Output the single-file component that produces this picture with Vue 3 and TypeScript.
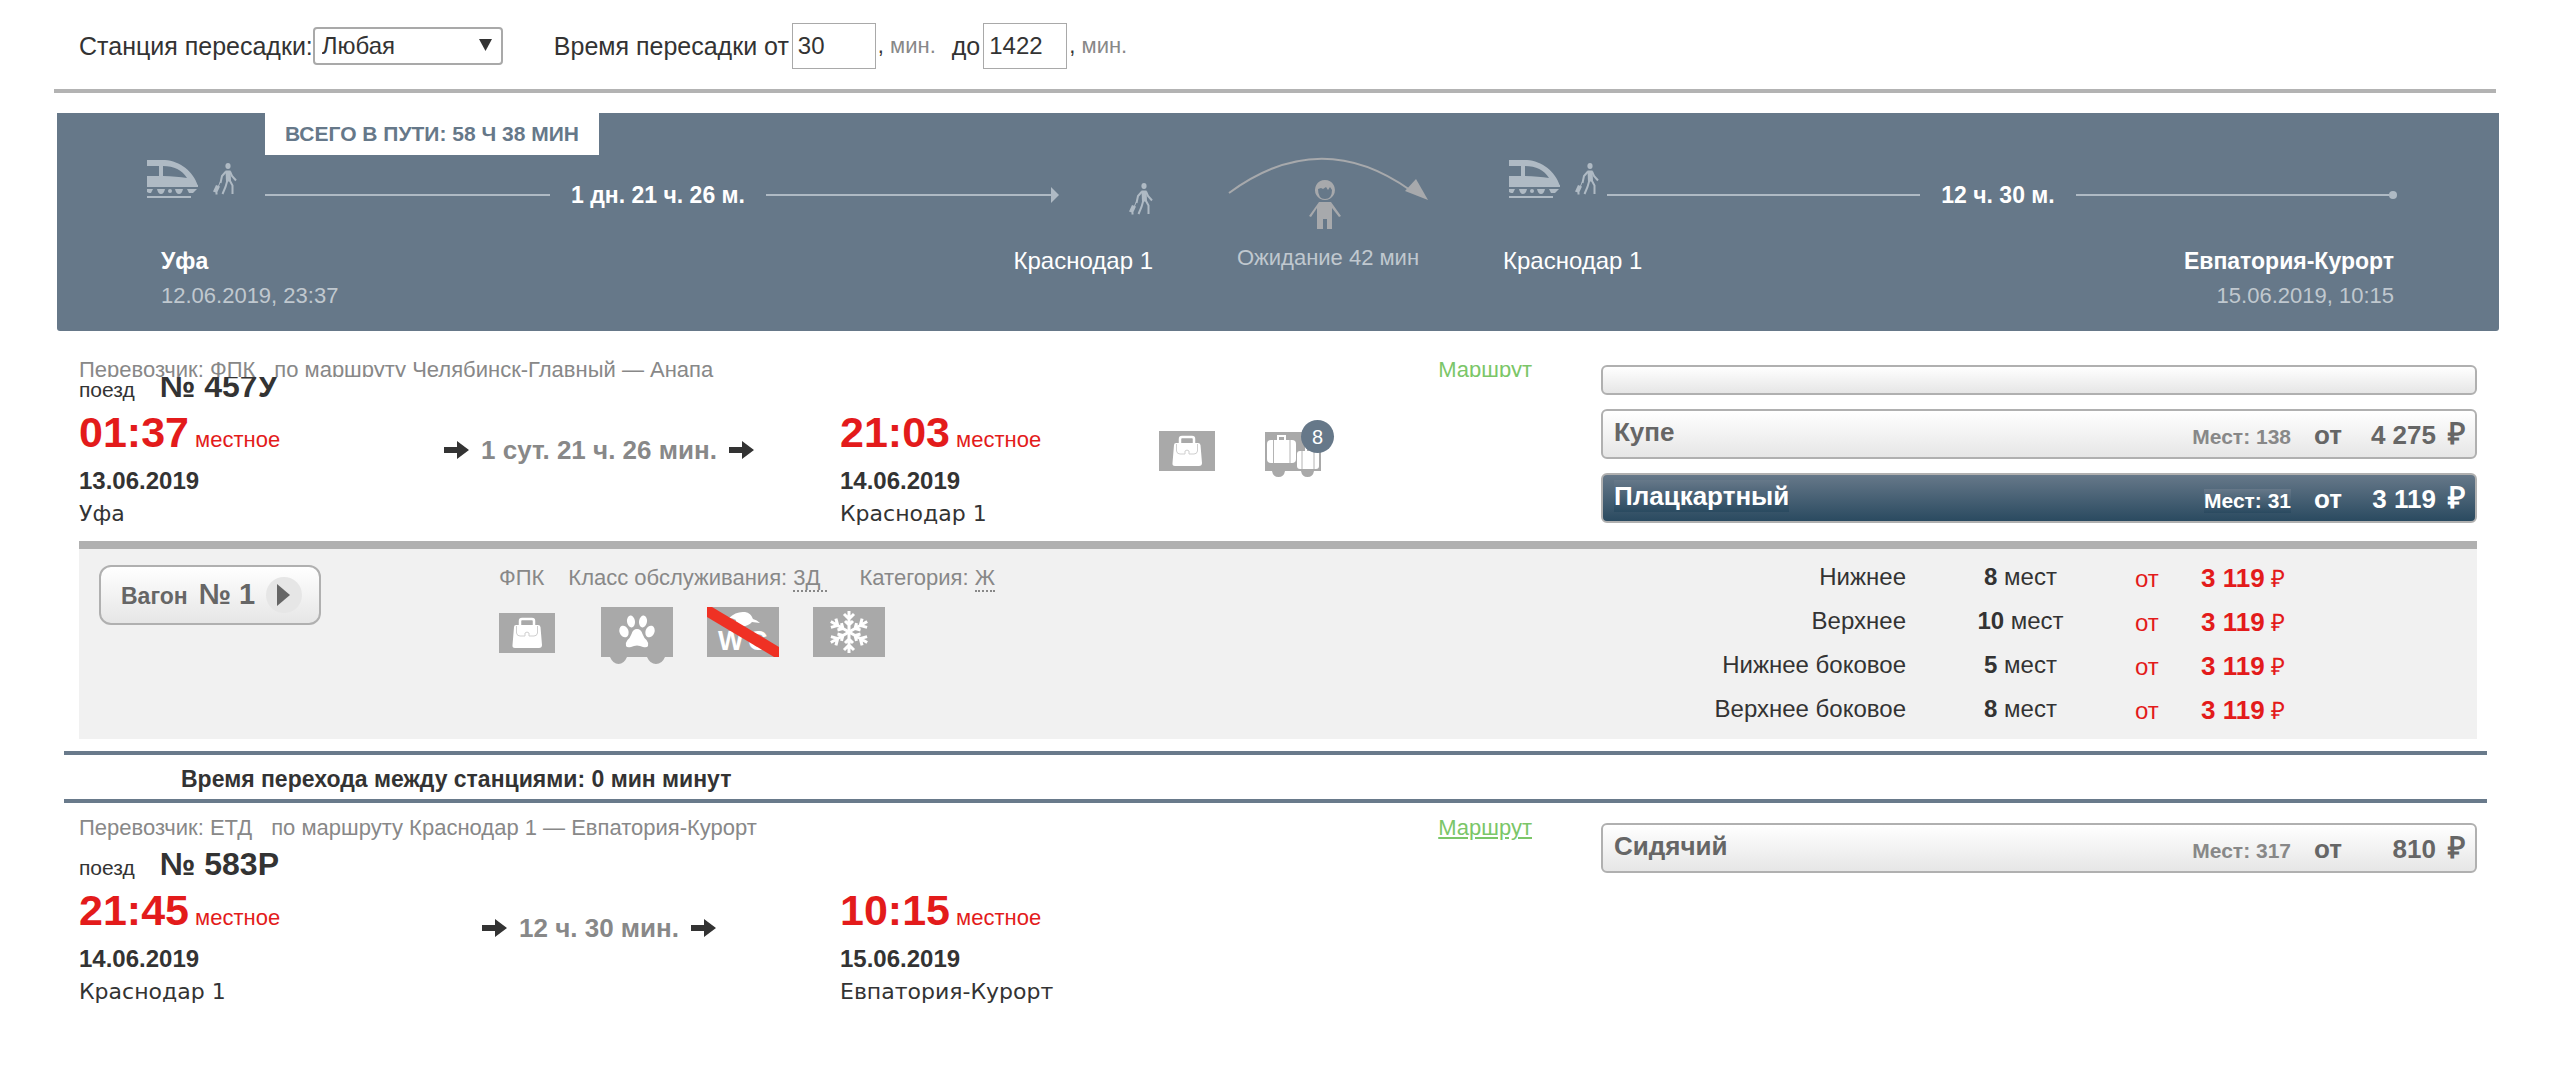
<script setup lang="ts">
import { ref } from 'vue'

interface Stop {
  time: string
  date: string
  city: string
}

interface Fare {
  name: string
  seats: number
  price: string
  selected?: boolean
  blank?: boolean
}

interface Trip {
  id: string
  carrier: string
  route: string
  number: string
  duration: string
  from: Stop
  to: Stop
  clipped: boolean
  services: boolean
  fares: Fare[]
}

const station = ref('any')
const minWait = ref('30')
const maxWait = ref('1422')

const first: Trip = {
  id: 'first',
  carrier: 'ФПК',
  route: 'Челябинск-Главный — Анапа',
  number: '№ 457У',
  duration: '1 сут. 21 ч. 26 мин.',
  from: { time: '01:37', date: '13.06.2019', city: 'Уфа' },
  to: { time: '21:03', date: '14.06.2019', city: 'Краснодар 1' },
  clipped: true,
  services: true,
  fares: [
    { name: '', seats: 0, price: '', blank: true },
    { name: 'Купе', seats: 138, price: '4 275' },
    { name: 'Плацкартный', seats: 31, price: '3 119', selected: true },
  ],
}

const second: Trip = {
  id: 'second',
  carrier: 'ЕТД',
  route: 'Краснодар 1 — Евпатория-Курорт',
  number: '№ 583Р',
  duration: '12 ч. 30 мин.',
  from: { time: '21:45', date: '14.06.2019', city: 'Краснодар 1' },
  to: { time: '10:15', date: '15.06.2019', city: 'Евпатория-Курорт' },
  clipped: false,
  services: false,
  fares: [{ name: 'Сидячий', seats: 317, price: '810' }],
}

const trips: Trip[] = [first, second]

const berths = [
  { name: 'Нижнее', count: 8, price: '3 119' },
  { name: 'Верхнее', count: 10, price: '3 119' },
  { name: 'Нижнее боковое', count: 5, price: '3 119' },
  { name: 'Верхнее боковое', count: 8, price: '3 119' },
]

const snowArms = [0, 60, 120, 180, 240, 300]
</script>

<template>
  <svg class="defs" aria-hidden="true">
    <symbol id="i-train" viewBox="0 0 51 39">
      <path fill-rule="evenodd" d="M0 0H18C33 1 46 11 51 26H0V16H12V6H0ZM16 6V16C25 16 33 17 40 18C35 10 27 6 16 6Z" />
      <path d="M0 25H51V27H0ZM0 29H6L4 33H2L0 32ZM10 29H18Q17 34 14 34Q11 34 10 29ZM28 29H36Q35 34 32 34Q29 34 28 29ZM40 29H50L46 33H42Z" />
      <circle cx="23" cy="31" r="2" />
      <rect y="36" width="44" height="2" />
    </symbol>
    <symbol id="i-walker" viewBox="0 0 24 32">
      <ellipse cx="15" cy="3" rx="2.6" ry="3" />
      <path d="M12.5 7.500H17.500L18 18L13 19Z" />
      <path d="M13 8.500L9 13L7.500 20M17 8.500L19 13L23 17.500M14.500 17L12.500 24L9.500 31M16.500 17L19.500 22.500L19.500 31" fill="none" stroke="currentColor" stroke-width="2" />
      <path d="M3 22L7 23.500L4 30L0 28.500ZM2.500 29.500H4.500V31.500H2.500Z" />
      <path d="M5.500 23L7.500 18.500" fill="none" stroke="currentColor" stroke-width="1" />
    </symbol>
    <symbol id="i-bag" viewBox="0 0 56 40">
      <rect width="56" height="40" fill="#a9a9a9" />
      <path d="M21 13V8Q21 6 23 6H33Q35 6 35 8V13" fill="none" stroke="#fff" stroke-width="2.500" />
      <path d="M17 12H39Q41 12 41.500 14L43 32Q43 35 40 35H16Q13 35 13.500 32L15 14Q15 12 17 12Z" fill="#fff" />
      <path d="M17.500 13V20Q18 23 21 23H26V20Q28 18 30 20V23H35Q38 23 38.500 20V13" fill="none" stroke="#cfcfcf" stroke-width="1" />
    </symbol>
    <symbol id="i-arrow" viewBox="0 0 25 18">
      <path d="M0 6H13V0L25 9L13 18V12H0Z" />
    </symbol>
  </svg>

  <main class="page">
    <form class="filters" @submit.prevent>
      <label for="station">Станция пересадки:</label>
      <span class="select-wrap">
        <select id="station" v-model="station">
          <option value="any">Любая</option>
        </select>
        <svg class="caret" width="13" height="12" viewBox="0 0 13 12"><path d="M0 0H13L6.500 12Z" fill="#333" /></svg>
      </span>
      <label for="min-wait">Время пересадки от</label>
      <input id="min-wait" v-model="minWait" type="text" />
      <span class="unit"><span class="comma">,</span> мин.</span>
      <label class="to-label" for="max-wait">до</label>
      <input id="max-wait" v-model="maxWait" type="text" />
      <span class="unit"><span class="comma">,</span> мин.</span>
    </form>

    <hr class="rule" />

    <section class="journey">
      <h2 class="total">ВСЕГО В ПУТИ: 58 Ч 38 МИН</h2>
      <div class="legs">
        <div class="leg leg-first">
          <div class="track">
            <svg class="train"><use href="#i-train" /></svg>
            <svg class="walker"><use href="#i-walker" /></svg>
            <span class="line line-first"></span>
            <b>1 дн. 21 ч. 26 м.</b>
            <span class="line"></span>
            <svg class="head" width="8" height="16" viewBox="0 0 8 16"><path d="M0 0L8 8L0 16Z" /></svg>
            <svg class="walker walker-end"><use href="#i-walker" /></svg>
          </div>
          <div class="places">
            <div>
              <strong>Уфа</strong>
              <time>12.06.2019, 23:37</time>
            </div>
            <div class="end"><span>Краснодар 1</span></div>
          </div>
        </div>

        <div class="pause">
          <svg width="200" height="80" viewBox="0 0 200 80">
            <path d="M1 38Q92 -29 182 35" fill="none" stroke="#a7a9ac" stroke-width="2" />
            <path d="M188 24L200 45L177 36Z" />
            <path fill-rule="evenodd" d="M97 25A10 10 0 1 1 96.900 25ZM90 34Q90 44 97 44Q104 44 104 35L102 32L100 35L98 32L95 34L93 33Z" />
            <path d="M91 47H103L113 61L111 62L104 53V74H99V64H95V74H89V53L83 62L81 61Z" />
          </svg>
          <p>Ожидание 42 мин</p>
        </div>

        <div class="leg leg-second">
          <div class="track">
            <svg class="train"><use href="#i-train" /></svg>
            <svg class="walker"><use href="#i-walker" /></svg>
            <span class="line line-near"></span>
            <b>12 ч. 30 м.</b>
            <span class="line"></span>
            <i class="dot"></i>
          </div>
          <div class="places">
            <div><span>Краснодар 1</span></div>
            <div class="end">
              <strong>Евпатория-Курорт</strong>
              <time>15.06.2019, 10:15</time>
            </div>
          </div>
        </div>
      </div>
    </section>

    <template v-for="trip in trips" :key="trip.id">
      <article class="trip" :class="{ clipped: trip.clipped }">
        <div class="info">
          <div class="carrier">
            <p>
              <span>Перевозчик: {{ trip.carrier }}</span>
              <span class="via">по маршруту {{ trip.route }}</span>
            </p>
            <a href="#">Маршрут</a>
          </div>
          <div class="number"><div class="number-text"><small>поезд</small><b>{{ trip.number }}</b></div></div>
          <div class="times">
            <div class="stop">
              <p class="clock"><b>{{ trip.from.time }}</b> местное</p>
              <p class="date">{{ trip.from.date }}</p>
              <p class="city">{{ trip.from.city }}</p>
            </div>
            <div class="duration">
              <svg width="25" height="18"><use href="#i-arrow" /></svg>
              <b>{{ trip.duration }}</b>
              <svg width="25" height="18"><use href="#i-arrow" /></svg>
            </div>
            <div class="stop">
              <p class="clock"><b>{{ trip.to.time }}</b> местное</p>
              <p class="date">{{ trip.to.date }}</p>
              <p class="city">{{ trip.to.city }}</p>
            </div>
            <div class="services">
              <template v-if="trip.services">
                <svg width="56" height="40"><use href="#i-bag" /></svg>
                <span class="luggage">
                  <svg width="56" height="47" viewBox="0 0 56 47">
                    <path d="M0 1H56V40H49Q48 46 42.500 46Q37 46 36 40H20Q19 46 13.500 46Q8 46 7 40H0Z" fill="#a9a9a9" />
                    <path d="M13 9V5H20V9M41 20V16H46V20" fill="none" stroke="#fff" stroke-width="2" />
                    <rect x="2" y="9" width="29" height="23" rx="4" fill="#fff" />
                    <rect x="32" y="20" width="22" height="18" rx="3" fill="#fff" />
                    <path d="M8.500 9V32M25 9V32M37 20V38M49 20V38" stroke="#b4b4b4" />
                  </svg>
                  <span class="badge">8</span>
                </span>
              </template>
            </div>
          </div>
        </div>
        <div class="fares">
          <button v-for="(fare, i) in trip.fares" :key="i" type="button" class="fare" :class="{ selected: fare.selected, blank: fare.blank }">
            <template v-if="!fare.blank">
              <span class="fare-name">{{ fare.name }}</span>
              <span class="fare-price">
                <span class="seats">Мест: {{ fare.seats }}</span>
                <span>от</span>
                <span class="amount">{{ fare.price }}</span>
                <span class="ruble">₽</span>
              </span>
            </template>
          </button>
        </div>
      </article>

      <template v-if="trip.id === 'first'">
        <section class="wagon">
          <div>
            <button type="button" class="wagon-button">
              <span>Вагон</span>
              <b>№ 1</b>
              <svg width="36" height="36" viewBox="0 0 36 36"><circle cx="18" cy="18" r="18" fill="#e6e6e6" /><path d="M11 7L24 18L11 29Z" fill="#666" /></svg>
            </button>
          </div>
          <div class="wagon-info">
            <p>
              <span>ФПК</span>
              <span>Класс обслуживания: <abbr>3Д&nbsp;</abbr></span>
              <span class="category">Категория: <abbr>Ж</abbr></span>
            </p>
            <div class="wagon-icons">
              <svg class="small-icon" width="56" height="40"><use href="#i-bag" /></svg>
              <svg width="72" height="57" viewBox="0 0 72 57">
                <path d="M0 0H72V50H64Q61 57 55 57Q49 57 46 50H26Q23 57 17.500 57Q12 57 9 50H0Z" fill="#a9a9a9" />
                <g fill="#fff">
                  <ellipse cx="30" cy="14.500" rx="4" ry="6" transform="rotate(-8 30 14.500)" />
                  <ellipse cx="42" cy="14.500" rx="4" ry="6" transform="rotate(8 42 14.500)" />
                  <ellipse cx="23" cy="24.500" rx="4.500" ry="6" transform="rotate(-20 23 24.500)" />
                  <ellipse cx="49" cy="24.500" rx="4.500" ry="6" transform="rotate(20 49 24.500)" />
                  <path d="M36 22Q40 22 41.500 27Q43 31 45.500 33Q48 36 47 39Q46 41 42 40Q36 37 30 40Q26 41 25 39Q24 36 26.500 33Q29 31 30.500 27Q32 22 36 22Z" />
                </g>
              </svg>
              <svg width="72" height="50" viewBox="0 0 72 50">
                <rect width="72" height="50" fill="#a9a9a9" />
                <path d="M22 11Q29 4 38 5Q44 6 46 12Q50 13 53 16L45 15Q41 20 33 19Q27 19 29 13Q26 11 22 11Z" fill="#fff" />
                <text class="wc" x="11" y="43">W</text>
                <text class="wc" x="41" y="43">C</text>
                <path d="M0 0H5L72 40V50H67L0 10Z" fill="#ef3124" />
              </svg>
              <svg width="72" height="50" viewBox="0 0 72 50">
                <rect width="72" height="50" fill="#a9a9a9" />
                <path v-for="angle in snowArms" :key="angle" :transform="`rotate(${angle} 36 25)`" d="M36 25V4M31 7L36 12L41 7M32 14L36 18L40 14" fill="none" stroke="#fff" stroke-width="3" />
              </svg>
            </div>
          </div>
          <table class="berths">
            <tbody>
              <tr v-for="berth in berths" :key="berth.name">
                <th scope="row">{{ berth.name }}</th>
                <td class="count"><b>{{ berth.count }}</b> мест</td>
                <td class="cost">от</td>
                <td class="cost"><b>{{ berth.price }}</b> ₽</td>
              </tr>
            </tbody>
          </table>
        </section>

        <p class="transfer">Время перехода между станциями: 0 мин минут</p>
      </template>
    </template>
  </main>
</template>

<style>
body {
  background: #fff;
}
</style>

<style scoped>
* {
  box-sizing: border-box;
}

.defs {
  position: absolute;
  width: 0;
  height: 0;
}

.page {
  font: 24px/28px "Liberation Sans", Arial, sans-serif;
  color: #333;
  padding: 23px 0 60px;
}

p,
h2 {
  margin: 0;
}

button,
input,
select {
  font: inherit;
  color: inherit;
}

.filters {
  display: flex;
  align-items: center;
  height: 46px;
  padding-left: 79px;
  white-space: nowrap;
}

.filters label {
  font-size: 25px;
}

.select-wrap {
  position: relative;
  margin-right: 51px;
}

select {
  display: block;
  width: 190px;
  height: 38px;
  padding: 0 7px;
  border: 2px solid #a9a9a9;
  border-radius: 4px;
  background: #fff;
  appearance: none;
}

.caret {
  position: absolute;
  right: 11px;
  top: 12px;
  pointer-events: none;
}

input {
  width: 84px;
  height: 46px;
  margin-left: 3px;
  padding: 0 5px;
  border: 1px solid #a9a9a9;
  background: #fff;
}

.unit {
  margin-left: 2px;
  font-size: 22px;
  color: #888;
}

.comma {
  color: #333;
}

.to-label {
  margin-left: 16px;
}

.rule {
  height: 4px;
  margin: 20px 64px 0 54px;
  border: 0;
  background: #b3b3b3;
}

.journey {
  margin: 20px 61px 0 57px;
  padding-bottom: 18px;
  border-radius: 0 0 3px 3px;
  background: #667889;
  color: #fff;
}

.total {
  width: fit-content;
  height: 42px;
  margin-left: 208px;
  padding: 0 20px;
  background: #fff;
  color: #667889;
  font-size: 21px;
  line-height: 42px;
}

.legs {
  display: grid;
  grid-template-columns: 1006fr 350px 894fr;
  padding: 0 102px 0 90px;
}

.track {
  display: flex;
  align-items: center;
  height: 80px;
  color: #afbac4;
  fill: currentColor;
}

.track b {
  margin: 0 21px;
  color: #fff;
  font-size: 23px;
}

.train,
.walker {
  flex: none;
  align-self: flex-start;
}

.train {
  width: 51px;
  height: 39px;
  margin: 5px 15px 0 0;
}

.walker {
  width: 24px;
  height: 32px;
  margin-top: 8px;
}

.walker-end {
  margin: 28px 0 0 70px;
}

.line {
  flex: 1;
  height: 2px;
  background: #afbac4;
}

.line-first {
  margin-left: 28px;
}

.line-near {
  margin-left: 8px;
}

.leg-second .track {
  padding-left: 6px;
}

.dot {
  width: 8px;
  height: 8px;
  border-radius: 50%;
  background: #afbac4;
}

.places {
  display: flex;
  justify-content: space-between;
  padding: 8px 0 0 14px;
}

.leg-second .places {
  padding: 8px 3px 0 0;
}

.places strong,
.places span,
.places time {
  display: block;
  line-height: 36px;
}

.places strong {
  font-size: 23px;
}

.places time {
  color: #c0c8cf;
  font-size: 22px;
  line-height: 34px;
}

.end {
  text-align: right;
}

.pause {
  text-align: center;
  fill: #a7a9ac;
}

.pause svg {
  display: block;
  margin: 0 auto;
}

.pause p {
  padding-top: 9px;
  color: #c0c8cf;
  font-size: 22px;
}

.trip {
  display: grid;
  grid-template-columns: 1522fr 876fr;
  margin: 0 83px 0 79px;
  padding-top: 12px;
}

.trip.clipped {
  margin-top: 14px;
}

.carrier {
  display: flex;
  justify-content: space-between;
  height: 31px;
  padding-right: 69px;
  overflow: hidden;
  color: #888;
  font-size: 22px;
  line-height: 25px;
}

.clipped .carrier {
  height: 20px;
}

.via {
  margin-left: 19px;
}

.carrier a {
  color: #7bc668;
}

.number {
  display: flex;
  align-items: flex-end;
  height: 36px;
  overflow: hidden;
}

.clipped .number {
  height: 27px;
}

.number-text {
  font-size: 32px;
  line-height: 36px;
}

.number small {
  margin-right: 25px;
  font-size: 21px;
  line-height: 21px;
}

.times {
  display: grid;
  grid-template-columns: 279fr 482fr 318fr 443fr;
  padding-top: 3px;
}

.clock {
  color: #e31b1b;
  font-size: 22px;
  line-height: 24px;
  white-space: nowrap;
}

.clock b {
  font-size: 43px;
  line-height: 50px;
}

.date {
  margin-top: 10px;
  font-weight: bold;
}

.city {
  margin-top: 5px;
  font-family: "DejaVu Sans", Verdana, sans-serif;
  font-size: 22px;
}

.duration {
  display: flex;
  align-items: center;
  align-self: start;
  justify-content: center;
  gap: 12px;
  margin-top: 28px;
  color: #888;
  font-size: 26px;
  line-height: 30px;
}

.duration svg {
  fill: #333;
}

.services {
  display: flex;
  align-items: flex-start;
  gap: 50px;
  padding: 24px 0 0 1px;
}

.luggage {
  position: relative;
}

.luggage svg {
  display: block;
}

.badge {
  position: absolute;
  top: -11px;
  left: 36px;
  width: 33px;
  height: 33px;
  border-radius: 50%;
  background: #667889;
  color: #fff;
  font-size: 20px;
  line-height: 34px;
  text-align: center;
}

.fares {
  display: flex;
  flex-direction: column;
  gap: 14px;
  padding-top: 8px;
}

.fare {
  display: flex;
  align-items: center;
  justify-content: space-between;
  height: 50px;
  padding: 0 10px 0 11px;
  border: 2px solid #b0b0b0;
  border-radius: 6px;
  background: linear-gradient(#fff, #e6e6e6);
  color: #666;
  font-size: 26px;
  font-weight: bold;
  line-height: 32px;
}

.fare.blank {
  height: 30px;
}

.fare-name {
  margin-bottom: 4px;
}

.fare-price {
  display: flex;
  align-items: baseline;
}

.seats {
  margin-right: 23px;
  color: #888;
  font-size: 21px;
  line-height: 24px;
}

.amount {
  width: 94px;
  text-align: right;
}

.ruble {
  width: 29px;
  font-size: 30px;
  text-align: right;
}

.fare.selected,
.selected .fare-name,
.selected .seats {
  background: linear-gradient(#667889, #2a4a60);
  color: #fff;
}

.wagon {
  display: grid;
  grid-template-columns: 420fr 1102fr 876fr;
  margin: 13px 83px 0 79px;
  border-top: 8px solid #b0b0b0;
  background: #f1f1f1;
}

.wagon-button {
  display: flex;
  align-items: baseline;
  height: 60px;
  margin: 16px 0 0 20px;
  padding: 13px 17px 0 20px;
  border: 2px solid #b0b0b0;
  border-radius: 12px;
  background: linear-gradient(#fff, #e6e6e6);
  color: #666;
  font-size: 23px;
  font-weight: bold;
}

.wagon-button b {
  margin: 0 11px;
  font-size: 29px;
}

.wagon-button svg {
  align-self: flex-start;
  margin-top: -3px;
}

.wagon-info {
  padding-top: 14px;
}

.wagon-info p {
  display: flex;
  gap: 24px;
  color: #888;
  font-size: 22px;
  line-height: 30px;
  white-space: nowrap;
}

.category {
  margin-left: 9px;
}

.wagon-info abbr {
  border-bottom: 2px dotted #888;
}

.wagon-icons {
  display: flex;
  align-items: flex-start;
  gap: 34px;
  padding-top: 14px;
}

.small-icon {
  margin: 6px 12px 0 0;
}

.wc {
  fill: #fff;
  font: bold 27px "Liberation Sans", Arial, sans-serif;
}

.berths {
  width: 100%;
  height: fit-content;
  margin: 6px 0 8px;
  border-collapse: collapse;
  table-layout: fixed;
}

.berths th,
.berths td {
  height: 44px;
  padding: 0;
  text-align: left;
  vertical-align: middle;
}

.berths th {
  width: 305px;
  font-weight: normal;
  text-align: right;
}

.berths .count {
  width: 229px;
  text-align: center;
}

.berths .cost {
  padding-top: 3px;
  color: #e31b1b;
}

.berths .count + .cost {
  width: 66px;
}

.cost b {
  font-size: 26px;
}

.transfer {
  height: 52px;
  margin: 12px 73px 0 64px;
  padding: 10px 0 0 117px;
  border: solid #697a8b;
  border-width: 4px 0;
  font-size: 23px;
  font-weight: bold;
}
</style>
